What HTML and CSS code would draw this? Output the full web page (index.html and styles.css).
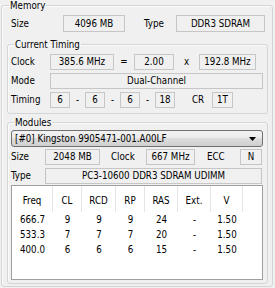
FILE: index.html
```html
<!DOCTYPE html>
<html>
<head>
<meta charset="utf-8">
<link rel="stylesheet" href="styles.css">
</head>
<body>
<fieldset class="group outer">
  <legend class="legend">Memory</legend>
  <div class="row row-top">
    <span class="lbl w52">Size</span>
    <span class="val tall w62">4096 MB</span>
    <span class="lbl w51 pl19">Type</span>
    <span class="val tall w89">DDR3 SDRAM</span>
  </div>

  <fieldset class="group inner timing">
    <legend class="legend">Current Timing</legend>
    <div class="row r-clock">
      <span class="lbl w39">Clock</span>
      <span class="val w64">385.6 MHz</span>
      <span class="sym w20">=</span>
      <span class="val w40">2.00</span>
      <span class="sym w25">x</span>
      <span class="val w57">192.8 MHz</span>
    </div>
    <div class="row r-next">
      <span class="lbl w39">Mode</span>
      <span class="val w213">Dual-Channel</span>
    </div>
    <div class="row r-next">
      <span class="lbl w39">Timing</span>
      <span class="val w20">6</span>
      <span class="sym w15">-</span>
      <span class="val w20">6</span>
      <span class="sym w15">-</span>
      <span class="val w20">6</span>
      <span class="sym w15">-</span>
      <span class="val w20">18</span>
      <span class="lbl w37 pl17">CR</span>
      <span class="val w21">1T</span>
    </div>
  </fieldset>

  <fieldset class="group inner modules">
    <legend class="legend">Modules</legend>
    <div class="combo">
      <span class="combo-text">[#0] Kingston 9905471-001.A00LF</span>
      <svg class="combo-arrow" width="7" height="4" viewBox="0 0 7 4"><polygon points="0,0 7,0 3.5,4" fill="#000"/></svg>
    </div>
    <div class="row r-msize">
      <span class="lbl w34">Size</span>
      <span class="val w55">2048 MB</span>
      <span class="lbl w46 pl11">Clock</span>
      <span class="val w49">667 MHz</span>
      <span class="lbl w45 pl12">ECC</span>
      <span class="val w22">N</span>
    </div>
    <div class="row r-next">
      <span class="lbl w34">Type</span>
      <span class="val w217">PC3-10600 DDR3 SDRAM UDIMM</span>
    </div>
    <div class="list">
      <div class="list-head">
        <span>Freq</span><span>CL</span><span>RCD</span><span>RP</span><span>RAS</span><span>Ext.</span><span>V</span><span class="last"></span>
      </div>
      <div class="list-row">
        <span>666.7</span><span>9</span><span>9</span><span>9</span><span>24</span><span>-</span><span>1.50</span><span></span>
      </div>
      <div class="list-row">
        <span>533.3</span><span>7</span><span>7</span><span>7</span><span>20</span><span>-</span><span>1.50</span><span></span>
      </div>
      <div class="list-row">
        <span>400.0</span><span>6</span><span>6</span><span>6</span><span>15</span><span>-</span><span>1.50</span><span></span>
      </div>
    </div>
  </fieldset>
</fieldset>
</body>
</html>
```

FILE: styles.css
```css
* { box-sizing: border-box; }
html, body { margin: 0; padding: 0; }
body {
  width: 275px;
  height: 288px;
  overflow: hidden;
  background: #f0f0f0;
  color: #000;
  font-family: "DejaVu Sans Condensed", "DejaVu Sans", sans-serif;
  font-size: 9.7px;
}

.group {
  margin: 0;
  padding: 0;
  min-width: 0;
  border: 1px solid #d3d6d9;
  border-radius: 3px;
  box-shadow: inset 1px 1px 0 #fbfbfb;
}
.legend {
  padding: 0 1px;
  margin-left: 7px;
  line-height: 11px;
}
.outer {
  margin-left: 1px;
  width: 272px;
  padding-bottom: 2px;
}
.inner {
  margin-left: 5px;
  width: 261px;
}
.inner .legend { margin-left: 6px; }
.timing { margin-top: 7px; padding-bottom: 5px; }
.modules { margin-top: 3px; padding-bottom: 3px; }

.row {
  display: flex;
  align-items: center;
  margin-left: 3px;
}
.row-top { margin-left: 9px; margin-top: 4px; }
.r-clock { margin-top: 4px; }
.r-next { margin-top: 3px; }
.r-msize { margin-top: 2px; }

.lbl {
  flex: none;
  line-height: 16px;
  white-space: nowrap;
}
.sym {
  flex: none;
  line-height: 16px;
  text-align: center;
}
.val {
  flex: none;
  height: 16px;
  line-height: 14px;
  border: 1px solid #c6c6c6;
  text-align: center;
  white-space: nowrap;
  overflow: hidden;
}
.val.tall { height: 17px; line-height: 15px; }

.w15 { width: 15px; } .w20 { width: 20px; } .w21 { width: 21px; }
.w22 { width: 22px; } .w25 { width: 25px; } .w34 { width: 34px; }
.w37 { width: 37px; } .w39 { width: 39px; } .w40 { width: 40px; }
.w45 { width: 45px; } .w46 { width: 46px; } .w49 { width: 49px; }
.w51 { width: 51px; } .w52 { width: 52px; } .w55 { width: 55px; }
.w57 { width: 57px; } .w62 { width: 62px; } .w64 { width: 64px; }
.w89 { width: 89px; } .w213 { width: 213px; } .w217 { width: 217px; }
.pl11 { padding-left: 11px; } .pl12 { padding-left: 12px; }
.pl17 { padding-left: 17px; } .pl19 { padding-left: 19px; }

.combo {
  margin: 2px 0 0 3px;
  width: 252px;
  height: 17px;
  display: flex;
  align-items: center;
  padding: 0 6px 0 3px;
  border: 1px solid #707070;
  border-radius: 3px;
  background: linear-gradient(#f2f2f2, #ebebeb 50%, #dddddd 50%, #cfcfcf);
  line-height: 15px;
}
.combo-text { flex: 1; white-space: nowrap; }
.combo-arrow { flex: none; display: block; }

.list {
  margin: 1px 0 0 3px;
  width: 252px;
  height: 95px;
  border: 1px solid #a0a0a0;
  background: #fff;
}
.list-head, .list-row {
  display: grid;
  grid-template-columns: 41px 29px 34px 29px 33px 33px 32px 19px;
}
.list-head { height: 26px; }
.list-head span {
  border-right: 1px solid #e5e5e5;
  text-align: center;
  padding-top: 3px;
  line-height: 23px;
}
.list-head span.last { border-right: none; }
.list-row { height: 15px; line-height: 15px; }
.list-row span { text-align: center; white-space: nowrap; }
```
